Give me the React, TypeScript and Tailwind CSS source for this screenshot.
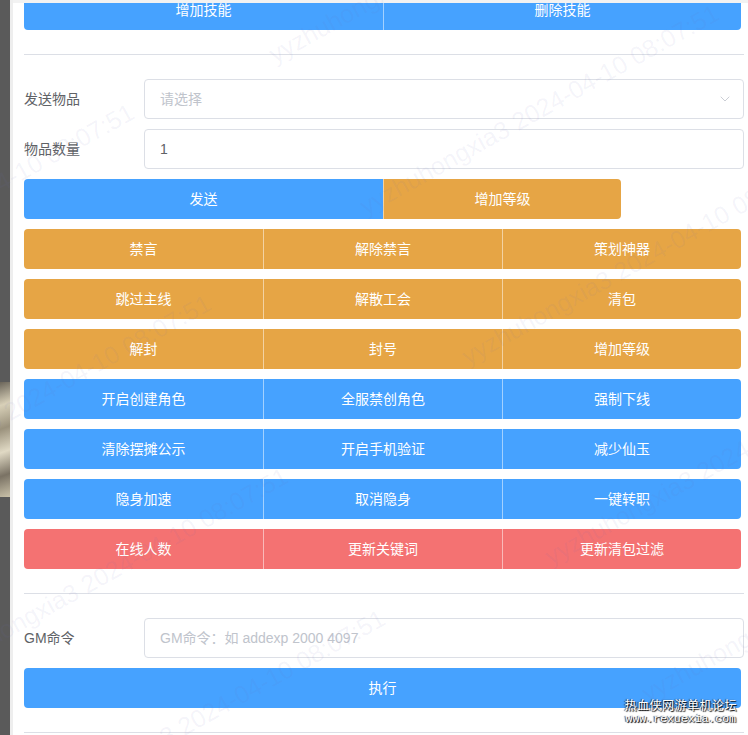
import { ChevronDown } from "lucide-react";

type Tone = "blue" | "orange" | "red";

const toneClass: Record<Tone, string> = {
  blue: "bg-[#46a2ff]",
  orange: "bg-[#e6a545]",
  red: "bg-[#f47272]",
};

const rows: { tone: Tone; items: string[] }[] = [
  { tone: "orange", items: ["禁言", "解除禁言", "策划神器"] },
  { tone: "orange", items: ["跳过主线", "解散工会", "清包"] },
  { tone: "orange", items: ["解封", "封号", "增加等级"] },
  { tone: "blue", items: ["开启创建角色", "全服禁创角色", "强制下线"] },
  { tone: "blue", items: ["清除摆摊公示", "开启手机验证", "减少仙玉"] },
  { tone: "blue", items: ["隐身加速", "取消隐身", "一键转职"] },
  { tone: "red", items: ["在线人数", "更新关键词", "更新清包过滤"] },
];

// faint user/time stamps laid diagonally over the panel
const marks = [
  "left-[277px] top-[42px]",
  "left-[368px] top-[194px]",
  "left-[470px] top-[344px]",
  "left-[553px] top-[544px]",
  "left-[650px] top-[681px]",
  "left-[-217px] top-[293px]",
  "left-[-140px] top-[484px]",
  "left-[-63px] top-[657px]",
  "left-[34px] top-[799px]",
];

const GroupButton = ({
  label,
  tone,
  first,
  last,
  className = "",
}: {
  label: string;
  tone: Tone;
  first?: boolean;
  last?: boolean;
  className?: string;
}) => (
  <button
    className={`${toneClass[tone]} ${first ? "rounded-l" : "border-l border-white/50"} ${
      last ? "rounded-r" : ""
    } ${className} h-10 flex items-center justify-center text-sm text-white`}
  >
    {label}
  </button>
);

const Divider = () => <div className="border-t border-[#dcdfe6] my-6" />;

const App = () => {
  return (
    <div className="relative w-[748px] h-[735px] overflow-hidden bg-white flex font-['Liberation_Sans','Noto_Sans_CJK_SC',sans-serif]">
      <div className="w-[10px] bg-[#5a5a5a] flex flex-col">
        <div className="mt-[382px] h-[115px] bg-[linear-gradient(160deg,#6b655a_0%,#d8d0b8_20%,#9a917c_40%,#e0d9c4_60%,#7a7264_80%,#c9c1a9_100%)]" />
      </div>
      <div className="w-[3px] bg-[#eeeeee]" />

      <div className="flex-1 pl-[11px] pr-[4px]">
        <div className="flex w-[717px] -mt-[10px]">
          <GroupButton label="增加技能" tone="blue" first className="w-[359px] rounded-tl-none" />
          <GroupButton label="删除技能" tone="blue" last className="flex-1 rounded-tr-none" />
        </div>

        <Divider />

        <div className="flex flex-col gap-[10px]">
          <div className="flex items-center">
            <label className="w-[120px] text-sm text-[#606266]">发送物品</label>
            <div className="flex-1 h-10 border border-[#dcdfe6] rounded flex items-center justify-between pl-[15px] pr-[10px]">
              <span className="text-sm text-[#c0c4cc]">请选择</span>
              <ChevronDown className="w-[16px] h-[16px] text-[#c0c4cc]" strokeWidth={1.25} />
            </div>
          </div>
          <div className="flex items-center">
            <label className="w-[120px] text-sm text-[#606266]">物品数量</label>
            <div className="flex-1 h-10 border border-[#dcdfe6] rounded flex items-center pl-[15px]">
              <span className="text-sm text-[#606266]">1</span>
            </div>
          </div>

          <div className="flex">
            <GroupButton label="发送" tone="blue" first className="w-[359px]" />
            <GroupButton label="增加等级" tone="orange" last className="w-[238px]" />
          </div>

          {rows.map((row, r) => (
            <div key={r} className="grid grid-cols-3 w-[717px]">
              {row.items.map((item, i) => (
                <GroupButton
                  key={item}
                  label={item}
                  tone={row.tone}
                  first={i === 0}
                  last={i === row.items.length - 1}
                />
              ))}
            </div>
          ))}
        </div>

        <Divider />

        <div className="flex flex-col gap-[10px]">
          <div className="flex items-center">
            <label className="w-[120px] text-sm text-[#606266]">GM命令</label>
            <div className="flex-1 h-10 border border-[#dcdfe6] rounded flex items-center pl-[15px]">
              <span className="text-sm text-[#c0c4cc]">GM命令：如 addexp 2000 4097</span>
            </div>
          </div>
          <button className="w-[717px] h-10 rounded bg-[#46a2ff] text-sm text-white flex items-center justify-center">
            执行
          </button>
        </div>

        <Divider />
      </div>

      <div className="absolute top-0 left-[13px] right-0 h-[3px] bg-[#f2f2f2]" />

      <div className="absolute inset-0 pointer-events-none">
        {marks.map((pos) => (
          <span
            key={pos}
            className={`absolute ${pos} origin-bottom-left -rotate-[29deg] whitespace-nowrap leading-none text-[25px] text-[rgba(110,110,190,0.07)]`}
          >
            yyzhuhongxia3 2024-04-10 08:07:51
          </span>
        ))}
      </div>

      <div className="absolute right-[11px] bottom-[10px] flex flex-col items-center text-white [text-shadow:1px_1px_1px_#000,-1px_0_1px_#333]">
        <span className="text-[12px] leading-[14px] tracking-[0.5px]">热血侠网游单机论坛</span>
        <span className="text-[11.5px] leading-[12px] font-['Liberation_Mono',monospace]">www.rexuexia.com</span>
      </div>
    </div>
  );
};

export default App;
